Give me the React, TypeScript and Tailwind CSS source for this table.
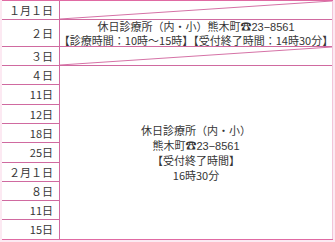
const leftRows = [
  { label: "１月１日", h: "h-[19px]" },
  { label: "２日", h: "h-[27px]" },
  { label: "３日", h: "h-[19px]" },
  { label: "４日", h: "h-[19px]" },
  { label: "11日", h: "h-[20px]" },
  { label: "12日", h: "h-[19px]" },
  { label: "18日", h: "h-[19px]" },
  { label: "25日", h: "h-[20px]" },
  { label: "２月１日", h: "h-[19px]" },
  { label: "８日", h: "h-[19px]" },
  { label: "11日", h: "h-[19px]" },
  { label: "15日", h: "h-[19px]" },
];

function Diagonal() {
  return (
    <svg
      className="absolute inset-0 h-full w-full"
      viewBox="0 0 100 100"
      preserveAspectRatio="none"
    >
      <line
        x1="0"
        y1="100"
        x2="100"
        y2="0"
        stroke="#d572a6"
        strokeWidth="1"
        vectorEffect="non-scaling-stroke"
      />
    </svg>
  );
}

function Tel() {
  return <span className="font-['Liberation_Sans',sans-serif]">23−8561</span>;
}

export default function App() {
  return (
    <div className="h-[242px] w-[335px] bg-[#fce9f2] pl-[2px] font-['Noto_Sans_CJK_JP',sans-serif] text-[11px] text-[#363636]">
      <div className="flex w-[331px] border-t border-b border-[#e06aa3] bg-white">
        {/* date column */}
        <div className="flex w-[58px] flex-col border-r border-[#d06aa0]">
          {leftRows.map((r, i) => (
            <div
              key={i}
              className={`flex items-center justify-end pr-[6px] leading-none ${r.h} ${
                i < leftRows.length - 1 ? "border-b border-[#d06aa0]" : ""
              }`}
            >
              {r.label}
            </div>
          ))}
        </div>

        {/* content column */}
        <div className="flex w-[273px] flex-col border-r border-[#f3c3d9]">
          <div className="relative h-[19px] border-b border-[#d06aa0]">
            <Diagonal />
          </div>
          <div className="flex h-[27px] flex-col items-center justify-center border-b border-[#d06aa0] leading-[13px] whitespace-nowrap">
            <div>
              休日診療所（内・小）熊木町☎<Tel />
            </div>
            <div>【診療時間：10時〜15時】【受付終了時間：14時30分】</div>
          </div>
          <div className="relative h-[19px] border-b border-[#d06aa0]">
            <Diagonal />
          </div>
          <div className="flex flex-1 flex-col items-center justify-center text-center leading-[14.5px]">
            <div>休日診療所（内・小）</div>
            <div>
              熊木町☎<Tel />
            </div>
            <div>【受付終了時間】</div>
            <div>16時30分</div>
          </div>
        </div>
      </div>
    </div>
  );
}
